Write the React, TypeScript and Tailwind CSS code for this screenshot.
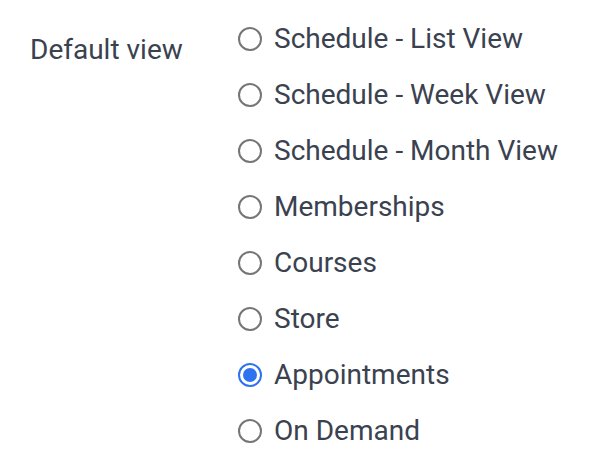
const options = [
  'Schedule - List View',
  'Schedule - Week View',
  'Schedule - Month View',
  'Memberships',
  'Courses',
  'Store',
  'Appointments',
  'On Demand',
]

const selected = 'Appointments'

const RadioDot = ({ checked }: { checked: boolean }) =>
  checked ? (
    <span className="flex size-[24px] shrink-0 items-center justify-center rounded-full border-[2.5px] border-[#2f72ef] bg-white">
      <span className="size-[14px] rounded-full bg-[#2f72ef]" />
    </span>
  ) : (
    <span className="size-[24px] shrink-0 rounded-full border-2 border-[#767676] bg-white" />
  )

export default function App() {
  return (
    <div
      className="flex h-[462px] w-[610px] bg-white pt-[11px] pl-[30px] text-[28px] text-[#3a4250]"
      style={{ fontFamily: 'Roboto, "Liberation Sans", sans-serif' }}
    >
      <div className="mt-[11px] w-[208px] shrink-0 leading-[56px]">Default view</div>
      <div className="flex flex-col">
        {options.map((label) => (
          <label key={label} className="flex h-[56px] items-center gap-[12px]">
            <RadioDot checked={label === selected} />
            <span>{label}</span>
          </label>
        ))}
      </div>
    </div>
  )
}
